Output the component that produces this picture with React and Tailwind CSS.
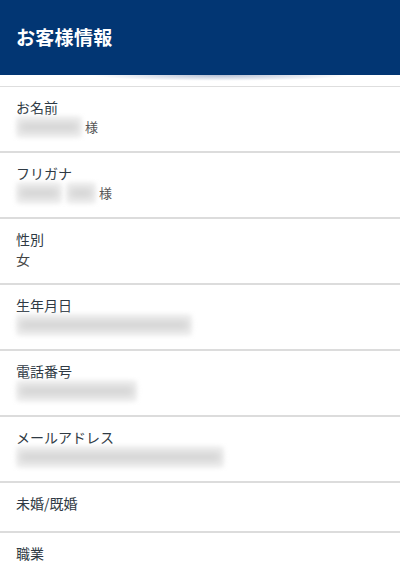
import React from "react";

const rows = [
  { label: "お名前", blur: [66], suffix: "様" },
  { label: "フリガナ", blur: [46, 30], suffix: "様" },
  { label: "性別", text: "女" },
  { label: "生年月日", blur: [176] },
  { label: "電話番号", blur: [121] },
  { label: "メールアドレス", blur: [208] },
  { label: "未婚/既婚" },
  { label: "職業" },
];

function Blur({ widths }) {
  return (
    <span className="flex items-center gap-1">
      {widths.map((w, i) => (
        <span key={i} className="flex h-[22px] items-center rounded-sm bg-[#efefef] px-[3px] blur-[2px]" style={{ width: w }}>
          <span className="h-[10px] w-full rounded-sm bg-[#d4d4d4] blur-[3px]" />
        </span>
      ))}
    </span>
  );
}

function Row({ label, blur, text, suffix, first }) {
  const empty = !blur && !text;
  return (
    <div className={`${first ? "" : "border-t-2 border-[#dcdcdc]"} px-4 pt-[10px] ${empty ? "pb-[18px]" : "pb-[14px]"}`}>
      <div className="h-5 text-[14px] leading-5 text-[#2f3a44]">{label}</div>
      {!empty && (
        <div className="flex h-5 items-center gap-[3px] text-[14px] leading-5 text-[#444]">
          {blur && <Blur widths={blur} />}
          {text && <span>{text}</span>}
          {suffix && <span className="text-[13px] text-[#555]">{suffix}</span>}
        </div>
      )}
    </div>
  );
}

export default function App() {
  return (
    <div className="h-[580px] w-[400px] overflow-hidden bg-white font-['Noto_Sans_CJK_JP',sans-serif]">
      <div className="relative">
        <div className="flex h-[75px] items-center bg-[#023673] px-4">
          <h1 className="text-[19px] font-bold tracking-[0.3px] text-white">お客様情報</h1>
        </div>
        <div className="absolute left-[90px] top-[75px] h-[6px] w-[260px] bg-[radial-gradient(ellipse_at_top,rgba(40,70,130,0.35),transparent_70%)]" />
      </div>
      <div className="mt-[11px] border-t border-[#dedede]">
        {rows.map((r, i) => (
          <Row key={r.label} {...r} first={i === 0} />
        ))}
      </div>
    </div>
  );
}
